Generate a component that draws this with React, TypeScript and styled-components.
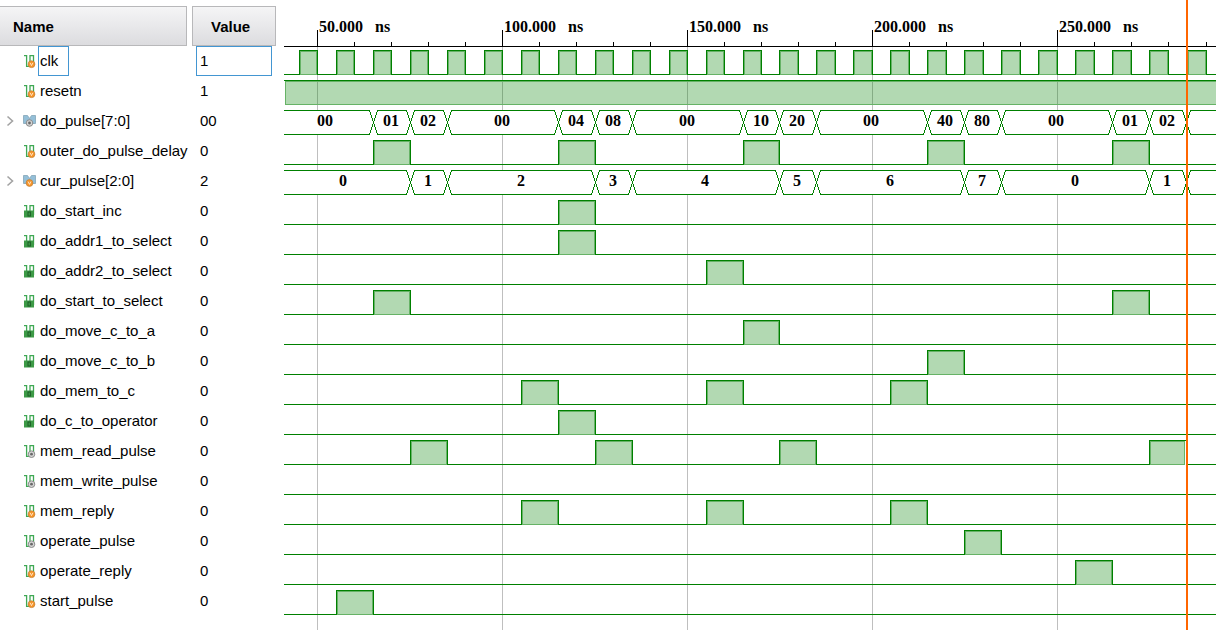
import React from "react";
import styled, { createGlobalStyle } from "styled-components";

type IconKind = "variable" | "output" | "constant" | "busOutput" | "busVariable";
type Range = [number, number];

interface Signal {
  name: string;
  value: string;
  icon: IconKind;
  pulses?: Range[];
  alwaysHigh?: boolean;
  bus?: { edges: number[]; labels: string[] };
}

const clockPulses: Range[] = [
  ...Array.from({ length: 24 }, (_, i): Range => [45 + i * 10, 50 + i * 10]),
  [285.3, 290.4],
];

const signals: Signal[] = [
  { name: "clk", value: "1", icon: "variable", pulses: clockPulses },
  { name: "resetn", value: "1", icon: "variable", alwaysHigh: true },
  {
    name: "do_pulse[7:0]",
    value: "00",
    icon: "busOutput",
    bus: {
      edges: [39, 65, 75, 85, 115, 125, 135, 165, 175, 185, 215, 225, 235, 265, 275, 285, 900],
      labels: ["00", "01", "02", "00", "04", "08", "00", "10", "20", "00", "40", "80", "00", "01", "02", ""],
    },
  },
  {
    name: "outer_do_pulse_delay",
    value: "0",
    icon: "variable",
    pulses: [[65, 75], [115, 125], [165, 175], [215, 225], [265, 275]],
  },
  {
    name: "cur_pulse[2:0]",
    value: "2",
    icon: "busVariable",
    bus: {
      edges: [39, 75, 85, 125, 135, 175, 185, 225, 235, 275, 285, 900],
      labels: ["0", "1", "2", "3", "4", "5", "6", "7", "0", "1", ""],
    },
  },
  { name: "do_start_inc", value: "0", icon: "constant", pulses: [[115, 125]] },
  { name: "do_addr1_to_select", value: "0", icon: "constant", pulses: [[115, 125]] },
  { name: "do_addr2_to_select", value: "0", icon: "constant", pulses: [[155, 165]] },
  { name: "do_start_to_select", value: "0", icon: "constant", pulses: [[65, 75], [265, 275]] },
  { name: "do_move_c_to_a", value: "0", icon: "constant", pulses: [[165, 175]] },
  { name: "do_move_c_to_b", value: "0", icon: "constant", pulses: [[215, 225]] },
  { name: "do_mem_to_c", value: "0", icon: "constant", pulses: [[105, 115], [155, 165], [205, 215]] },
  { name: "do_c_to_operator", value: "0", icon: "constant", pulses: [[115, 125]] },
  { name: "mem_read_pulse", value: "0", icon: "output", pulses: [[75, 85], [125, 135], [175, 185], [275, 285]] },
  { name: "mem_write_pulse", value: "0", icon: "output", pulses: [] },
  { name: "mem_reply", value: "0", icon: "variable", pulses: [[105, 115], [155, 165], [205, 215]] },
  { name: "operate_pulse", value: "0", icon: "output", pulses: [[225, 235]] },
  { name: "operate_reply", value: "0", icon: "variable", pulses: [[255, 265]] },
  { name: "start_pulse", value: "0", icon: "variable", pulses: [[55, 65]] },
];

const GlobalStyle = createGlobalStyle`
  * { box-sizing: border-box; }
  body { margin: 0; background: #fff; color: #000; font-family: "Liberation Sans", Arial, sans-serif; }
`;

const Viewer = styled.main`
  display: flex;
  align-items: stretch;
  min-height: 100vh;
  overflow: hidden;
`;

const SignalTable = styled.table`
  flex: none;
  align-self: flex-start;
  width: 276px;
  margin: 6px 8px 0 0;
  table-layout: fixed;
  border-collapse: separate;
  border-spacing: 0;
  font-size: 15px;
`;

const HeaderCell = styled.th<{ $width: number }>`
  width: ${(p) => p.$width}px;
  padding: 0;
  text-align: left;
`;

const HeaderBox = styled.div<{ $first?: boolean }>`
  display: flex;
  align-items: center;
  height: 40px;
  margin-right: ${(p) => (p.$first ? 5 : 0)}px;
  padding-left: ${(p) => (p.$first ? 13 : 18)}px;
  border: 1px solid #b8b8ba;
  border-left-width: ${(p) => (p.$first ? 0 : 1)}px;
  background: linear-gradient(#f5f5f6, #dcdcdf);
`;

const Cell = styled.td`
  height: 30px;
  padding: 0;
`;

const NameCell = styled.div`
  display: flex;
  align-items: center;
  height: 30px;
  padding-left: 4px;
  white-space: nowrap;
`;

const Expander = styled.button`
  display: flex;
  width: 12px;
  height: 20px;
  padding: 0;
  align-items: center;
  justify-content: center;
  border: 0;
  background: none;
`;

const ExpanderGap = styled.span`
  width: 12px;
`;

const IconSlot = styled.span`
  display: flex;
  width: 16px;
  margin-left: 6px;
`;

const SignalName = styled.span<{ $selected: boolean }>`
  display: flex;
  align-items: center;
  height: 30px;
  padding: 0 ${(p) => (p.$selected ? 10 : 1)}px 2px 1px;
  border: 1px solid ${(p) => (p.$selected ? "#4396d2" : "transparent")};
`;

const SignalValue = styled.div<{ $selected: boolean }>`
  display: flex;
  align-items: center;
  height: 30px;
  margin: 0 4px;
  padding: 0 0 2px 3px;
  border: 1px solid ${(p) => (p.$selected ? "#4396d2" : "transparent")};
`;

const WavePanel = styled.section`
  display: flex;
  flex: 1;
  min-width: 0;
`;

const WaveCanvas = styled.svg`
  display: block;
  width: 100%;
  min-height: 620px;
  overflow: hidden;
  shape-rendering: crispEdges;
`;

const WaveText = styled.text`
  font: bold 16px "Liberation Serif", "Times New Roman", serif;
  fill: #000;
`;

function SignalIcon({ kind }: { kind: IconKind }) {
  const isBus = kind === "busOutput" || kind === "busVariable";
  const gray = kind === "output" || kind === "busOutput";
  const cx = isBus ? 7.5 : 9.5;
  const cy = isBus ? 10 : 11.2;
  return (
    <svg width="16" height="16" viewBox="0 0 16 16" aria-hidden="true">
      {isBus && (
        <path
          d="M1.5 2.5H5.5L7.5 5.5L9.5 2.5H13.5V10.5H10.5L7.5 7L4.5 10.5H1.5Z"
          fill="#94bfd8"
          stroke="#83a5b8"
          strokeWidth="0.8"
        />
      )}
      {!isBus && (
        <path
          d="M2 2.6H4.6V13.4H8V2.6H11.5V12"
          fill="none"
          stroke="#3fa854"
          strokeWidth="1.3"
        />
      )}
      {kind === "constant" && (
        <>
          <rect x="2" y="7.5" width="10" height="7" fill="#3c9a46" />
          <rect x="6" y="9" width="2.4" height="4" fill="none" stroke="#1d5c27" strokeWidth="1" />
        </>
      )}
      {kind !== "constant" && gray && (
        <>
          <circle cx={cx} cy={cy} r="3.3" fill="#d6d6d6" stroke="#8b8b8b" />
          <circle cx={cx} cy={cy} r="1.4" fill="#696969" />
        </>
      )}
      {kind !== "constant" && !gray && (
        <>
          <circle cx={cx} cy={cy} r="3.4" fill="#f7962b" stroke="#c07c34" strokeWidth="0.7" />
          <path
            d={`M${cx - 1.4} ${cy - 1.4}L${cx} ${cy + 1.4}L${cx + 1.4} ${cy - 1.4}`}
            fill="none"
            stroke="#ffe9d0"
            strokeWidth="0.9"
          />
        </>
      )}
    </svg>
  );
}

const FIRST_ROW = 50;
const ROW_HEIGHT = 30;
const WAVE_HEIGHT = 24;
const FAR_RIGHT = 4000;
const CURSOR_TIME = 285;
const GREEN = "#008000";

const timeToX = (ns: number) => Math.round(33.45 + (ns - 50) * 3.6962);

function Pulses({ pulses, y }: { pulses: Range[]; y: number }) {
  const bottom = y + WAVE_HEIGHT;
  let line = `M0 ${bottom + 0.5}`;
  pulses.forEach(([from, to]) => {
    line += `H${timeToX(from) + 0.5}V${y + 0.5}H${timeToX(to) + 0.5}V${bottom + 0.5}`;
  });
  line += `H${FAR_RIGHT}`;
  return (
    <g>
      {pulses.map(([from, to]) => (
        <rect
          key={from}
          x={timeToX(from) + 1.5}
          y={y + 1.5}
          width={timeToX(to) - timeToX(from) - (to === CURSOR_TIME ? 3 : 2)}
          height={WAVE_HEIGHT - 1}
          fill="#b2d9b2"
          stroke="#66b366"
        />
      ))}
      <path d={line} fill="none" stroke={GREEN} />
    </g>
  );
}

function Bus({ edges, labels, y }: { edges: number[]; labels: string[]; y: number }) {
  const top = y + 0.5;
  const middle = top + WAVE_HEIGHT / 2;
  const bottom = top + WAVE_HEIGHT;
  return (
    <g>
      {labels.map((label, i) => {
        const from = timeToX(edges[i]) + 0.5;
        const to = timeToX(edges[i + 1]) + 0.5;
        return (
          <g key={edges[i]}>
            <path
              d={`M${from} ${middle}L${from + 4} ${top}H${to - 4}L${to} ${middle}L${to - 4} ${bottom}H${from + 4}Z`}
              fill="#fff"
              stroke={GREEN}
            />
            {label && (
              <WaveText x={Math.round((from + to) / 2) - 1} y={y + 16} textAnchor="middle">
                {label}
              </WaveText>
            )}
          </g>
        );
      })}
    </g>
  );
}

function Waveforms() {
  const major = [50, 100, 150, 200, 250];
  const minor = [60, 70, 80, 90, 110, 120, 130, 140, 160, 170, 180, 190, 210, 220, 230, 240, 260, 270, 280, 290.4];
  return (
    <WaveCanvas role="img" aria-label="Signal waveforms">
      {major.map((t) => (
        <line key={t} x1={timeToX(t) + 0.5} x2={timeToX(t) + 0.5} y1="47" y2="100%" stroke="#bfbfbf" />
      ))}
      <path d={`M0 46.5H${FAR_RIGHT}`} stroke="#000" />
      {major.map((t) => (
        <g key={t}>
          <path d={`M${timeToX(t) + 0.5} 30V46`} stroke="#000" />
          <WaveText x={timeToX(t) + 2} y="32">
            {t}.000 <tspan dx="8">ns</tspan>
          </WaveText>
        </g>
      ))}
      {minor.map((t) => (
        <path key={t} d={`M${timeToX(t) + 0.5} 42V46`} stroke="#000" />
      ))}
      {signals.map((signal, i) => {
        const y = FIRST_ROW + i * ROW_HEIGHT;
        if (signal.bus) return <Bus key={signal.name} y={y} {...signal.bus} />;
        if (signal.alwaysHigh) {
          return (
            <g key={signal.name}>
              <rect
                x="1.5"
                y={y + 1.5}
                width={FAR_RIGHT}
                height={WAVE_HEIGHT - 1}
                fill={GREEN}
                fillOpacity="0.3"
                stroke="#66b366"
              />
              <path d={`M0 ${y + 0.5}H${FAR_RIGHT}`} stroke={GREEN} />
            </g>
          );
        }
        return <Pulses key={signal.name} pulses={signal.pulses ?? []} y={y} />;
      })}
      <rect x={timeToX(CURSOR_TIME)} y="0" width="2" height="100%" fill="#ff6600" />
    </WaveCanvas>
  );
}

export default function App() {
  return (
    <>
      <GlobalStyle />
      <Viewer>
        <SignalTable>
          <thead>
            <tr>
              <HeaderCell scope="col" $width={192}>
                <HeaderBox $first>Name</HeaderBox>
              </HeaderCell>
              <HeaderCell scope="col" $width={84}>
                <HeaderBox>Value</HeaderBox>
              </HeaderCell>
            </tr>
          </thead>
          <tbody>
            {signals.map((signal, i) => (
              <tr key={signal.name}>
                <Cell>
                  <NameCell>
                    {signal.bus ? (
                      <Expander type="button" aria-label={`Expand ${signal.name}`}>
                        <svg width="8" height="12" viewBox="0 0 8 12">
                          <path d="M1.5 1.5L6.5 6L1.5 10.5" fill="none" stroke="#a3a3a3" strokeWidth="1.6" />
                        </svg>
                      </Expander>
                    ) : (
                      <ExpanderGap />
                    )}
                    <IconSlot>
                      <SignalIcon kind={signal.icon} />
                    </IconSlot>
                    <SignalName $selected={i === 0}>{signal.name}</SignalName>
                  </NameCell>
                </Cell>
                <Cell>
                  <SignalValue $selected={i === 0}>{signal.value}</SignalValue>
                </Cell>
              </tr>
            ))}
          </tbody>
        </SignalTable>
        <WavePanel>
          <Waveforms />
        </WavePanel>
      </Viewer>
    </>
  );
}
